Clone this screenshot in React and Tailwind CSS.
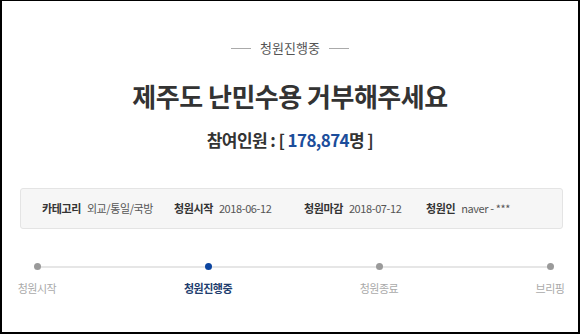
import React from 'react';

const font = { fontFamily: '"Noto Sans CJK KR", "Noto Sans", sans-serif' };

const info = [
  { label: '카테고리', value: '외교/통일/국방', w: 'w-[132px]' },
  { label: '청원시작', value: '2018-06-12', w: 'w-[130px]' },
  { label: '청원마감', value: '2018-07-12', w: 'w-[122px]' },
  { label: '청원인', value: 'naver - ***', w: '' },
];

const steps = [
  { name: '청원시작', active: false },
  { name: '청원진행중', active: true },
  { name: '청원종료', active: false },
  { name: '브리핑', active: false },
];

const App = () => {
  return (
    <div
      className="w-[580px] h-[334px] bg-white border-t border-x-2 border-b-2 border-black flex flex-col overflow-hidden"
      style={font}
    >
      {/* status */}
      <div className="flex items-center justify-center gap-[9px] pt-[39px] text-[13px] leading-[16px] text-[#555]">
        <span className="w-[20px] h-px bg-[#aaa]"></span>
        <span>청원진행중</span>
        <span className="w-[20px] h-px bg-[#aaa]"></span>
      </div>

      {/* title */}
      <h1 className="mt-[24px] text-center text-[26px] leading-[32px] font-bold text-[#333] tracking-[-0.5px]">
        제주도 난민수용 거부해주세요
      </h1>

      {/* count */}
      <div className="mt-[16px] text-center text-[17px] leading-[24px] font-bold text-[#333] tracking-[-0.6px]">
        참여인원 : [ <span className="text-[#1b4d9b]">178,874</span>명 ]
      </div>

      {/* info box */}
      <div className="mt-[36px] ml-[18px] mr-[15px] h-[41px] flex items-center px-[21px] bg-[#f6f6f6] border border-[#e4e4e4] rounded-[3px] text-[11px] tracking-[-0.4px] whitespace-nowrap">
        {info.map((item) => (
          <div key={item.label} className={`${item.w} shrink-0 flex items-center gap-[6px]`}>
            <span className="font-bold text-[#333]">{item.label}</span>
            <span className="text-[#555]">{item.value}</span>
          </div>
        ))}
      </div>

      {/* timeline */}
      <div className="relative mt-[34px] pl-[10px] pr-[3px] flex justify-between">
        <div className="absolute left-[35px] right-[28px] top-[3px] h-[2px] bg-[#e6e6e6]"></div>
        {steps.map((step) => (
          <div key={step.name} className="relative w-[50px] flex flex-col items-center">
            <span
              className={
                step.active
                  ? 'w-[7px] h-[7px] rounded-full bg-[#0c45a0]'
                  : 'w-[7px] h-[7px] rounded-full bg-[#9a9a9a]'
              }
            ></span>
            <span
              className={
                step.active
                  ? 'mt-[10px] text-[11px] leading-[16px] font-bold text-[#213d6e] whitespace-nowrap tracking-[-0.5px]'
                  : 'mt-[10px] text-[11px] leading-[16px] text-[#aaa] whitespace-nowrap tracking-[-0.5px]'
              }
            >
              {step.name}
            </span>
          </div>
        ))}
      </div>
    </div>
  );
};

export default App;
